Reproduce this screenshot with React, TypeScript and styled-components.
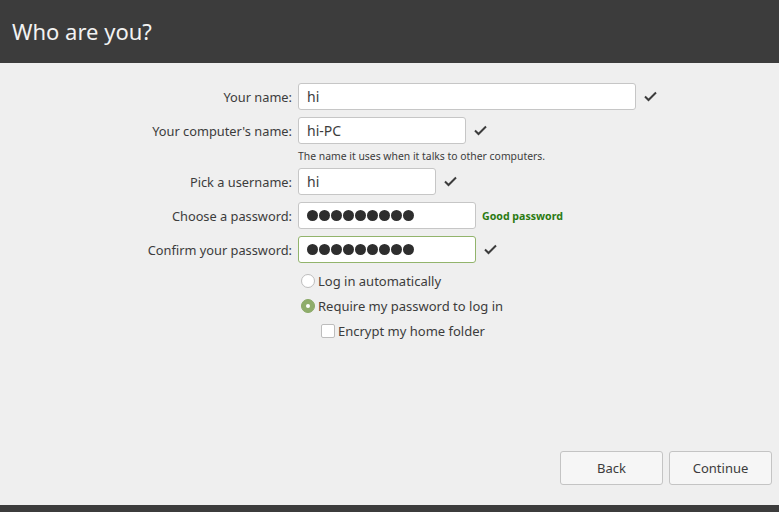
import React from "react";
import styled, { createGlobalStyle } from "styled-components";

const Global = createGlobalStyle`
  html, body { margin: 0; padding: 0; }
  body {
    font-family: "Noto Sans", "Open Sans", sans-serif;
    background: #efefef;
    color: #3c3c3c;
  }
`;

const Page = styled.div`
  display: flex;
  flex-direction: column;
  height: 512px;
  width: 779px;
  background: #efefef;
`;

const Header = styled.header`
  height: 63px;
  background: #3c3c3c;
  display: flex;
  align-items: center;
  padding-left: 12px;
  box-sizing: border-box;
`;

const Title = styled.h1`
  margin: 0;
  font-size: 22px;
  font-weight: 400;
  color: #f2f2f2;
  padding-bottom: 2px;
`;

const Content = styled.main`
  flex: 1;
  padding-top: 20px;
`;

const Form = styled.div`
  display: grid;
  grid-template-columns: 292px 1fr;
  column-gap: 6px;
  row-gap: 7px;
  align-items: center;
`;

const Label = styled.label`
  text-align: right;
  font-size: 12.8px;
  color: #3c3c3c;
`;

const Field = styled.div`
  display: flex;
  align-items: center;
  gap: 8px;
`;

const Input = styled.div<{ $w: number; $ok?: boolean }>`
  width: ${(p) => p.$w}px;
  height: 27px;
  box-sizing: border-box;
  border: 1px solid ${(p) => (p.$ok ? "#92b46c" : "#c6c6c6")};
  border-radius: 3px;
  background: #ffffff;
  display: flex;
  align-items: center;
  padding-left: 8px;
  font-size: 14px;
  color: #3c3c3c;
`;

const Dots = styled.div`
  display: flex;
  gap: 1px;
`;

const Dot = styled.span`
  width: 11px;
  height: 11px;
  border-radius: 50%;
  background: #2e2e2e;
`;

const Hint = styled.div`
  grid-column: 2;
  font-size: 10.4px;
  line-height: 10px;
  color: #3c3c3c;
`;

const Strength = styled.span`
  font-size: 10.6px;
  font-weight: 700;
  color: #2a7a12;
  margin-left: -2px;
`;

const Options = styled.div`
  grid-column: 2;
  display: flex;
  flex-direction: column;
  gap: 5px;
  margin-top: 1px;
`;

const Option = styled.div<{ $indent?: boolean }>`
  height: 20px;
  display: flex;
  align-items: center;
  gap: 3px;
  padding-left: ${(p) => (p.$indent ? 23 : 3)}px;
  font-size: 13px;
  color: #3c3c3c;
`;

const Radio = styled.span<{ $on?: boolean }>`
  width: 14px;
  height: 14px;
  box-sizing: border-box;
  border-radius: 50%;
  border: 1px solid ${(p) => (p.$on ? "#8aa966" : "#bdbdbd")};
  background: ${(p) => (p.$on ? "#8fad6b" : "#ffffff")};
  display: flex;
  align-items: center;
  justify-content: center;
  &::after {
    content: "";
    width: 4px;
    height: 4px;
    border-radius: 50%;
    background: ${(p) => (p.$on ? "#ffffff" : "transparent")};
  }
`;

const Check = styled.span`
  width: 14px;
  height: 14px;
  box-sizing: border-box;
  border-radius: 2px;
  border: 1px solid #bdbdbd;
  background: #ffffff;
`;

const Footer = styled.div`
  display: flex;
  justify-content: flex-end;
  gap: 6px;
  padding: 0 7px 20px 0;
`;

const Button = styled.button`
  width: 103px;
  height: 34px;
  box-sizing: border-box;
  border: 1px solid #c4c4c4;
  border-radius: 3px;
  background: #f6f6f6;
  font-family: inherit;
  font-size: 13px;
  color: #3c3c3c;
`;

const BottomBar = styled.div`
  height: 7px;
  background: #3c3c3c;
`;

const Tick = () => (
  <svg width="13" height="11" viewBox="0 0 13 11">
    <polyline points="1,5.5 4.5,9 12,1.5" fill="none" stroke="#3c3c3c" strokeWidth="2" />
  </svg>
);

const Mask = () => (
  <Dots>
    {Array.from({ length: 9 }).map((_, i) => (
      <Dot key={i} />
    ))}
  </Dots>
);

export default function App() {
  return (
    <Page>
      <Global />
      <Header>
        <Title>Who are you?</Title>
      </Header>
      <Content>
        <Form>
          <Label>Your name:</Label>
          <Field>
            <Input $w={338}>hi</Input>
            <Tick />
          </Field>
          <Label>Your computer's name:</Label>
          <Field>
            <Input $w={168}>hi-PC</Input>
            <Tick />
          </Field>
          <Hint>The name it uses when it talks to other computers.</Hint>
          <Label>Pick a username:</Label>
          <Field>
            <Input $w={138}>hi</Input>
            <Tick />
          </Field>
          <Label>Choose a password:</Label>
          <Field>
            <Input $w={178}>
              <Mask />
            </Input>
            <Strength>Good password</Strength>
          </Field>
          <Label>Confirm your password:</Label>
          <Field>
            <Input $w={178} $ok>
              <Mask />
            </Input>
            <Tick />
          </Field>
          <Options>
            <Option>
              <Radio />
              Log in automatically
            </Option>
            <Option>
              <Radio $on />
              Require my password to log in
            </Option>
            <Option $indent>
              <Check />
              Encrypt my home folder
            </Option>
          </Options>
        </Form>
      </Content>
      <Footer>
        <Button>Back</Button>
        <Button>Continue</Button>
      </Footer>
      <BottomBar />
    </Page>
  );
}
